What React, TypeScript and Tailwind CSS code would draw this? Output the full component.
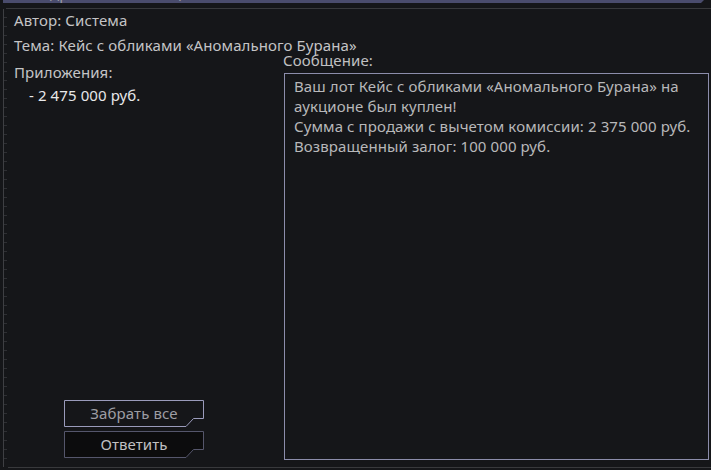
const font = { fontFamily: "'Noto Sans', 'Open Sans', sans-serif" };

function FrameButton({ label, active }: { label: string; active?: boolean }) {
  return (
    <button
      type="button"
      className={`relative flex h-[27px] w-[140px] items-center justify-center text-[15px] leading-[20px] ${
        active ? "text-[#9d9da3]" : "text-[#c0c0c2]"
      }`}
    >
      <svg className="absolute inset-0" width="140" height="27" viewBox="0 0 140 27">
        <path
          d="M0.5 0.5H139.5V18.5H129.5L122 26.5H0.5Z"
          fill={active ? "#151619" : "#0c0c0d"}
          stroke={active ? "#9a9bbb" : "#55566b"}
          strokeWidth="1"
        />
      </svg>
      <span className="relative -mt-px">{label}</span>
    </button>
  );
}

export default function App() {
  return (
    <div style={font} className="flex h-[470px] w-[711px] flex-col overflow-hidden bg-[#151619] tracking-[0.1px] text-[#c4c4c6]">
      <div className="ml-[3px] h-[3px] w-[701px] overflow-hidden bg-[#4a4c6d] [clip-path:polygon(0_0,100%_0,calc(100%-3px)_100%,0_100%)]">
        <div className="relative -top-[17px] pl-[27px] text-[15px] leading-[20px] text-[#9a9aa2]">Подробности сообщения</div>
      </div>

      <div className="ml-[6px] mt-[5px] h-px bg-[#38393c]" />

      <div className="flex h-[458px]">
        <div className="ml-[3px] w-[4px] border-l border-[#3e3f43] bg-[repeating-linear-gradient(180deg,transparent_0px,transparent_8px,#2e2f33_8px,#2e2f33_9px)]" />

        <div className="flex flex-1 flex-col pl-[7px] pt-px text-[15px] leading-[20px]">
          <div>Автор: Система</div>
          <div className="mt-[5px]">Тема: Кейс с обликами «Аномального Бурана»</div>

          <div className="-mt-[5px] flex h-[410px]">
            <div className="flex w-[269px] flex-col">
              <div className="pt-[12px]">Приложения:</div>
              <div className="mt-[3px] pl-[15px] text-[#e8e8ea]">- 2 475 000 руб.</div>
              <div className="flex-1" />
              <div className="ml-[50px] flex flex-col gap-[4px] pb-[2px]">
                <FrameButton label="Забрать все" active />
                <FrameButton label="Ответить" />
              </div>
            </div>

            <div className="mr-[2px] flex flex-1 flex-col">
              <div className="text-[#c0c0c2]">Сообщение:</div>
              <div className="ml-px mt-[3px] flex-1 border border-[#8c8dab] pl-[9px] pt-[2px] text-[#b8b8ba]">
                <div>Ваш лот Кейс с обликами «Аномального Бурана» на</div>
                <div>аукционе был куплен!</div>
                <div>Сумма с продажи с вычетом комиссии: 2 375 000 руб.</div>
                <div>Возвращенный залог: 100 000 руб.</div>
              </div>
            </div>
          </div>
        </div>
      </div>

      <div className="ml-[8px] h-px bg-[#38393c]" />
    </div>
  );
}
